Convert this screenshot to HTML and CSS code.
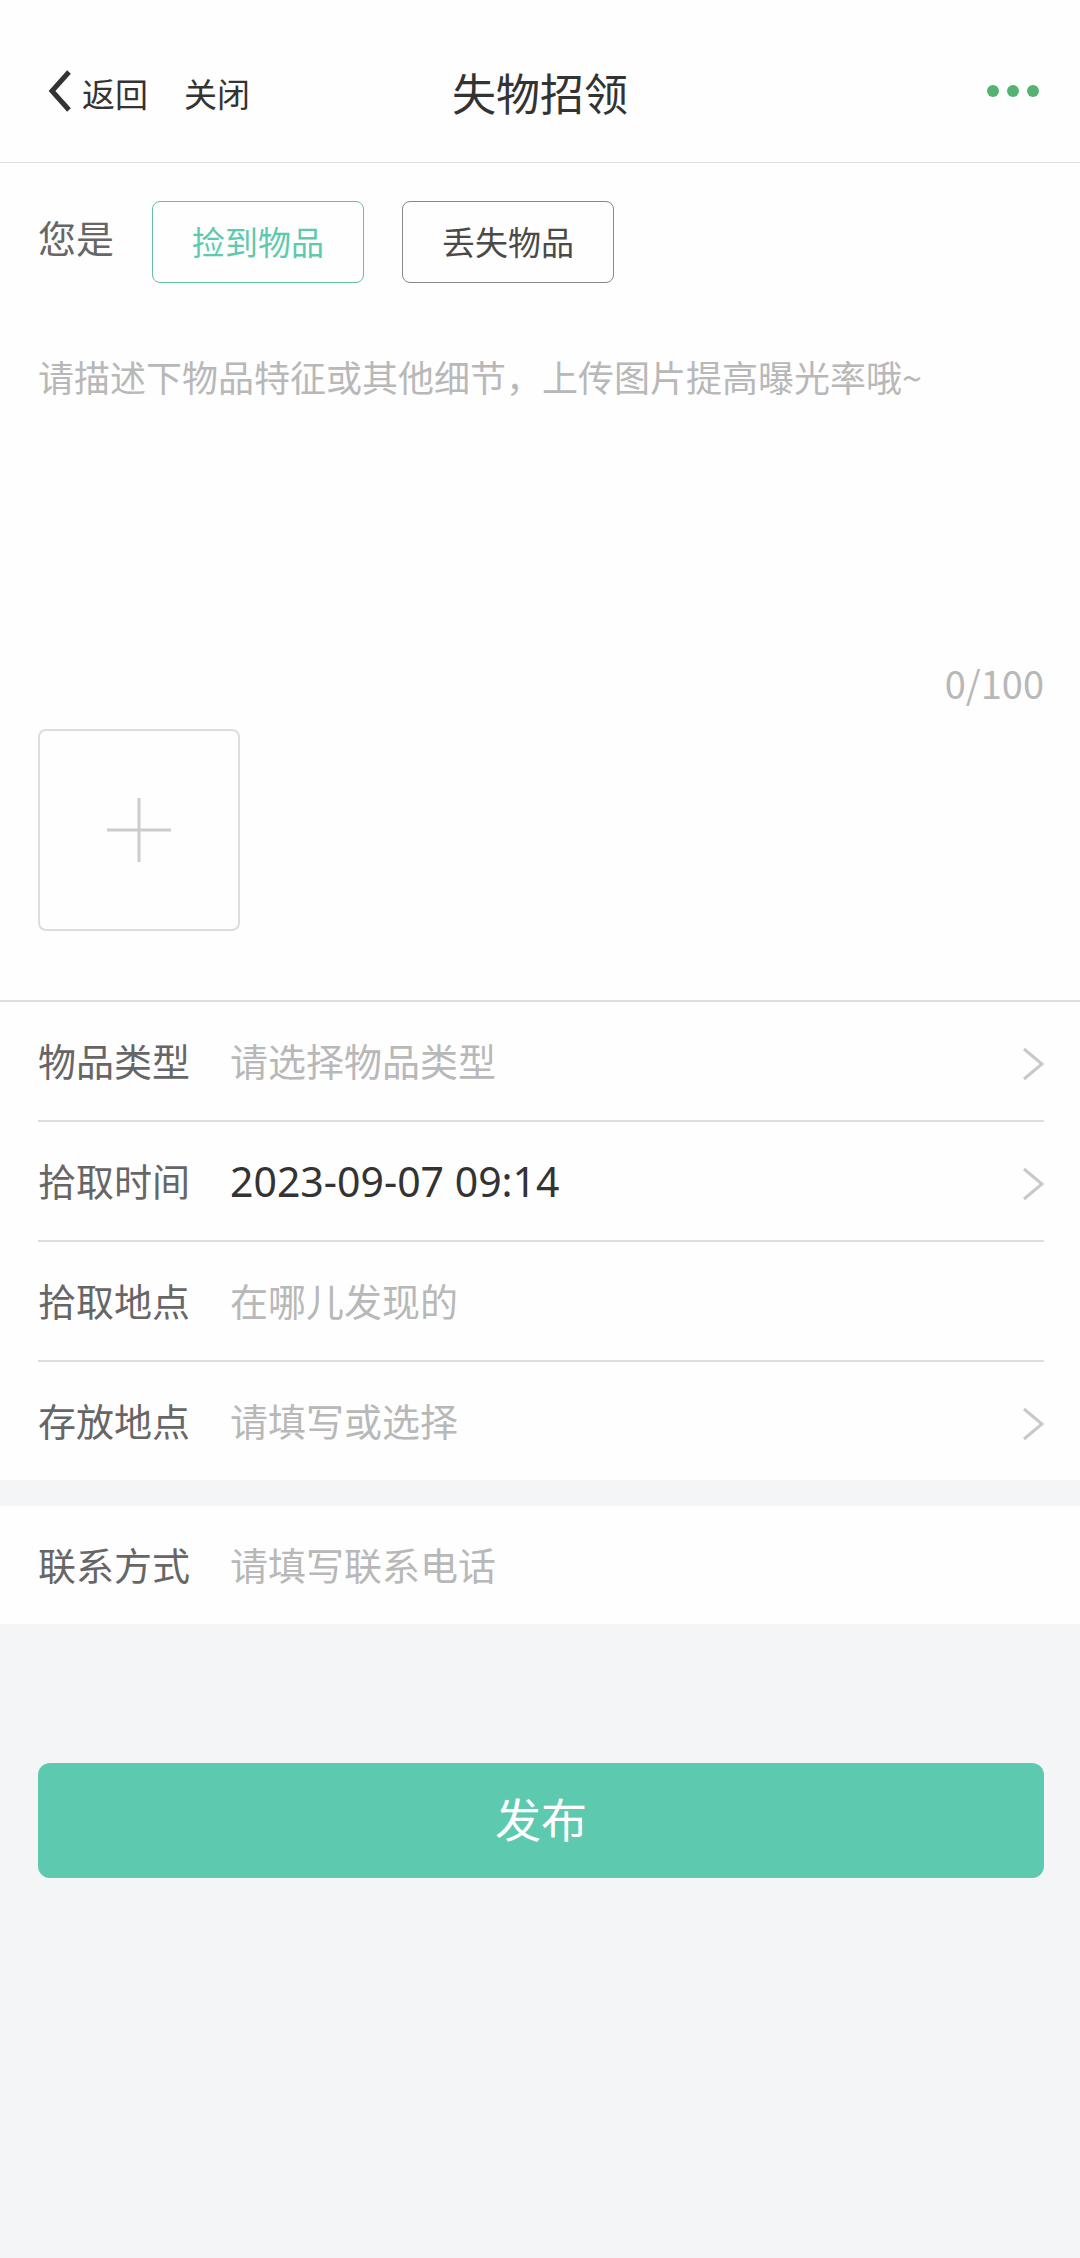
FILE: index.html
```html
<!DOCTYPE html>
<html lang="zh-CN">
<head>
<meta charset="utf-8">
<meta name="viewport" content="width=device-width, initial-scale=1">
<title>失物招领</title>
<link rel="stylesheet" href="styles.css">
</head>
<body>
<header class="topbar">
  <nav class="topbar-nav">
    <button class="nav-button nav-back" type="button">
      <svg class="back-icon" viewBox="0 0 24 42" aria-hidden="true"><path d="M21 2 4 21 21 40"/></svg>
      <span class="nav-text">返回</span>
    </button>
    <button class="nav-button" type="button"><span class="nav-text">关闭</span></button>
  </nav>
  <h1 class="topbar-title">失物招领</h1>
  <button class="nav-button nav-more" type="button" aria-label="更多">
    <svg class="more-icon" viewBox="0 0 52 12" aria-hidden="true"><circle cx="6" cy="6" r="6"/><circle cx="26" cy="6" r="6"/><circle cx="46" cy="6" r="6"/></svg>
  </button>
</header>

<form class="form">
  <section class="panel describe">
    <div class="role" role="group" aria-labelledby="role-label">
      <span class="role-label" id="role-label">您是</span>
      <button class="role-option role-option-active" type="button" aria-pressed="true">捡到物品</button>
      <button class="role-option" type="button" aria-pressed="false">丢失物品</button>
    </div>
    <textarea class="description" maxlength="100" aria-label="物品描述" placeholder="请描述下物品特征或其他细节，上传图片提高曝光率哦~"></textarea>
    <div class="counter">0/100</div>
    <button class="upload" type="button" aria-label="上传图片">
      <svg class="plus-icon" viewBox="0 0 64 64" aria-hidden="true"><path d="M32 0v64M0 32h64"/></svg>
    </button>
  </section>

  <section class="panel fields">
    <div class="field">
      <label class="field-label" for="type">物品类型</label>
      <select class="field-control field-empty" id="type"><option>请选择物品类型</option></select>
      <svg class="arrow-icon" viewBox="0 0 21 34" aria-hidden="true"><path d="M1 2 19 17 1 32"/></svg>
    </div>
    <div class="field">
      <label class="field-label" for="time">拾取时间</label>
      <input class="field-control field-time" id="time" type="text" value="2023-09-07 09:14" readonly>
      <svg class="arrow-icon" viewBox="0 0 21 34" aria-hidden="true"><path d="M1 2 19 17 1 32"/></svg>
    </div>
    <div class="field">
      <label class="field-label" for="place">拾取地点</label>
      <input class="field-control" id="place" type="text" placeholder="在哪儿发现的">
    </div>
    <div class="field">
      <label class="field-label" for="storage">存放地点</label>
      <input class="field-control" id="storage" type="text" placeholder="请填写或选择">
      <svg class="arrow-icon" viewBox="0 0 21 34" aria-hidden="true"><path d="M1 2 19 17 1 32"/></svg>
    </div>
  </section>

  <section class="panel contact">
    <div class="field">
      <label class="field-label" for="phone">联系方式</label>
      <input class="field-control" id="phone" type="tel" placeholder="请填写联系电话">
    </div>
  </section>

  <div class="actions">
    <button class="submit" type="submit">发布</button>
  </div>
</form>
</body>
</html>
```
FILE: styles.css
```css
* {
  box-sizing: border-box;
}

body {
  margin: 0;
  background: #f4f5f7;
  color: #333;
  font-family: "Noto Sans CJK SC", sans-serif;
  font-size: 38px;
}

button,
input,
select,
textarea {
  margin: 0;
  padding: 0;
  border: 0;
  background: none;
  color: inherit;
  font: inherit;
}

svg {
  display: block;
  flex: none;
  fill: none;
}

/* Top bar */
.topbar {
  display: grid;
  grid-template-columns: 1fr auto 1fr;
  align-items: center;
  height: 163px;
  padding: 20px 41px 0;
  border-bottom: 1px solid #dedede;
  background: #fefefe;
}

.topbar-nav {
  display: flex;
  align-items: center;
  gap: 36px;
  padding-left: 7px;
}

.nav-button {
  font-size: 33px;
  line-height: 48px;
}

.nav-text {
  display: block;
  padding-top: 4px;
}

.nav-back {
  display: flex;
  align-items: center;
  gap: 10px;
}

.back-icon {
  width: 24px;
  height: 42px;
  stroke: #333;
  stroke-width: 5px;
}

.topbar-title {
  margin: 0;
  padding-top: 2px;
  font-size: 44px;
  font-weight: 400;
  line-height: 64px;
}

.nav-more {
  justify-self: end;
}

.more-icon {
  width: 52px;
  height: 12px;
  fill: #56b271;
}

/* Description block */
.panel {
  background: #fefefe;
}

.describe {
  padding: 38px 36px 69px 38px;
  border-bottom: 2px solid #ddd;
}

.role {
  display: flex;
  align-items: flex-start;
  gap: 38px;
}

.role-label {
  color: #666;
  line-height: 72px;
}

.role-option {
  width: 212px;
  height: 82px;
  padding-bottom: 2px;
  border: 1px solid #888;
  border-radius: 8px;
  color: #4a4a4a;
  font-size: 33px;
}

.role-option-active {
  border-color: #62bfa8;
  color: #5dc9ae;
}

.description {
  display: block;
  width: 100%;
  height: 306px;
  margin-top: 66px;
  font-size: 36px;
  line-height: 54px;
  resize: none;
}

::placeholder {
  color: #b8b8b8;
  opacity: 1;
}

.counter {
  margin-bottom: 18px;
  color: #b8b8b8;
  line-height: 56px;
  text-align: right;
}

.upload {
  display: grid;
  place-items: center;
  width: 202px;
  height: 202px;
  border: 2px solid #ddd;
  border-radius: 8px;
}

.plus-icon {
  width: 64px;
  height: 64px;
  stroke: #ccc;
  stroke-width: 3px;
}

/* Form rows */
.fields,
.contact {
  padding: 0 36px 0 38px;
}

.contact {
  margin-top: 26px;
}

.field {
  display: flex;
  align-items: center;
  gap: 40px;
  height: 118px;
}

.field + .field {
  height: 120px;
  border-top: 2px solid #ddd;
}

.field-label {
  flex: none;
  padding-bottom: 4px;
  color: #666;
}

.field-control {
  flex: 1;
  min-width: 0;
  height: 60px;
  padding-bottom: 4px;
  outline: 0;
  appearance: none;
}

.field-empty {
  color: #b8b8b8;
}

.field-time {
  padding-bottom: 0;
  font-family: "Noto Sans", sans-serif;
  font-size: 41px;
}

.arrow-icon {
  width: 21px;
  height: 34px;
  margin-top: 6px;
  stroke: #c8c8c8;
  stroke-width: 3px;
}

/* Submit */
.actions {
  padding: 139px 36px 0 38px;
}

.submit {
  width: 100%;
  height: 115px;
  padding-bottom: 8px;
  border-radius: 12px;
  background: #5dc9ae;
  color: #fff;
  font-size: 46px;
}
```
